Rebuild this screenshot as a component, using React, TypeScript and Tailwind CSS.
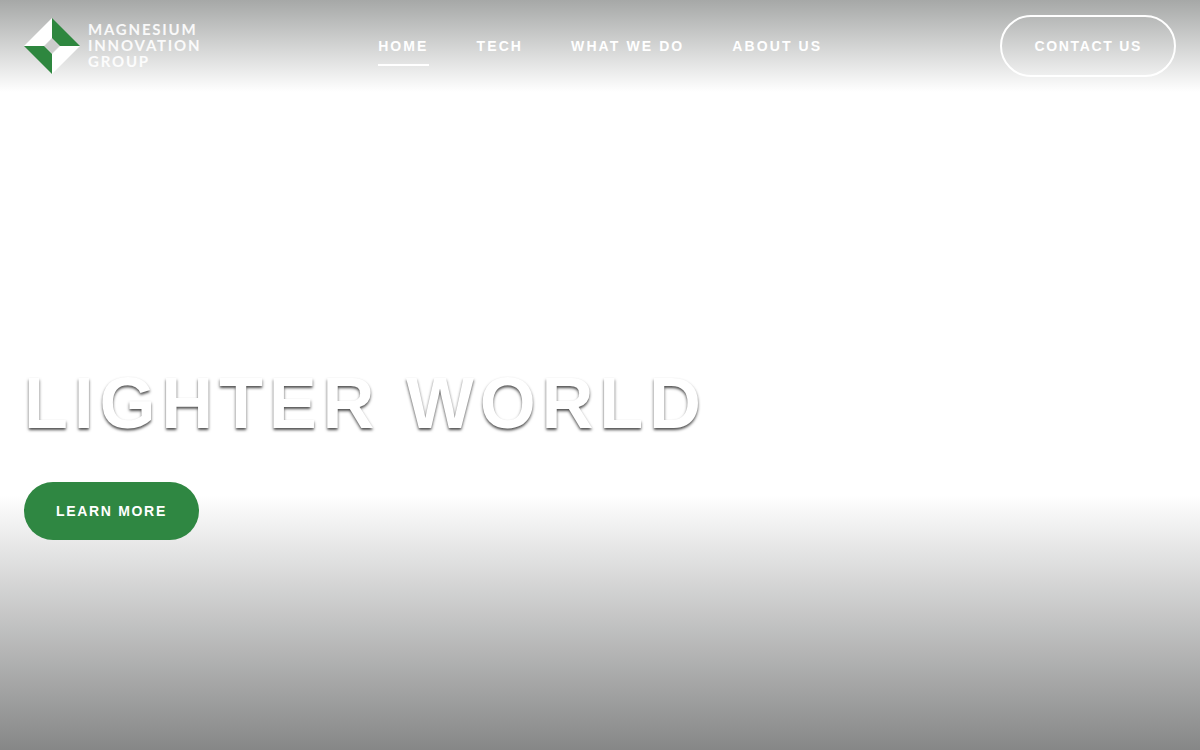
const links = ["Home", "Tech", "What we do", "About us"];

function Logo() {
  return (
    <a href="#home" aria-label="Magnesium Innovation Group" className="flex w-44 items-center gap-2">
      <svg viewBox="0 0 56 56" className="size-14 shrink-0" aria-hidden="true">
        <path d="M28 0V20L20 28H0Z" fill="#fff" />
        <path d="M28 0L56 28H36L28 20Z" fill="#2e873f" />
        <path d="M56 28L28 56V36L36 28Z" fill="#fff" />
        <path d="M0 28H20L28 36V56Z" fill="#2e873f" />
        <path d="M28 21L35 28L28 35L21 28Z" fill="#cbcccb" />
      </svg>
      <span className="pb-0.5 font-['Lato',sans-serif] text-[15px] leading-4 font-bold tracking-[0.12em] whitespace-nowrap text-white/90">
        MAGNESIUM
        <br />
        INNOVATION
        <br />
        GROUP
      </span>
    </a>
  );
}

export default function App() {
  return (
    <div className="flex min-h-screen flex-col bg-[linear-gradient(to_top,#868787,#ffffff)] bg-[length:100%_34%] bg-bottom bg-no-repeat font-['Liberation_Sans',Arial,sans-serif] text-white">
      <header className="flex items-center justify-between bg-[linear-gradient(to_bottom,#a6a8a7,#ffffff)] px-6 py-[15px]">
        <Logo />
        <nav aria-label="Main" className="flex gap-12 text-sm font-bold tracking-[0.15em] uppercase">
          {links.map((label, i) => (
            <a
              key={label}
              href={"#" + label.toLowerCase().replaceAll(" ", "-")}
              aria-current={i === 0 ? "page" : undefined}
              className="border-y-2 border-transparent py-2 aria-[current=page]:border-b-white"
            >
              {label}
            </a>
          ))}
        </nav>
        <a
          href="#contact"
          className="rounded-full border-2 border-white px-8 py-[19px] text-sm font-bold tracking-[0.12em] uppercase"
        >
          Contact us
        </a>
      </header>
      <main className="flex grow flex-col items-start justify-end px-6 pb-[210px]">
        <h1 className="text-7xl font-bold tracking-[0.08em] uppercase [text-shadow:0_2px_3px_rgb(0_0_0/0.7)]">
          Lighter world
        </h1>
        <button
          type="button"
          className="mt-[43px] cursor-pointer rounded-full bg-[#2f8742] px-8 py-[19px] text-sm font-bold tracking-[0.12em] uppercase"
        >
          Learn more
        </button>
      </main>
    </div>
  );
}
